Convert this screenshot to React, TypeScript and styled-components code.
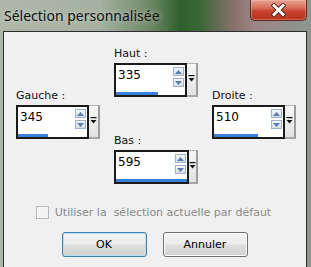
import React from "react"
import styled, { createGlobalStyle } from "styled-components"

const GlobalStyle = createGlobalStyle`
    html, body {
        margin: 0;
        padding: 0;
        background: #f0f0f0;
    }
`

const Window = styled.div`
    width: 311px;
    height: 267px;
    box-sizing: border-box;
    display: flex;
    flex-direction: column;
    padding: 0 4px 0 3px;
    background: linear-gradient(90deg, #aeb8aa 0%, #a4b0a0 32%, #6f8a68 48%, #2f5f2d 58%, #3a6636 64%, #8d7370 76%, #9a8584 82%, #8d9690 100%);
    font-family: "DejaVu Sans", Tahoma, sans-serif;
`

const TitleBar = styled.div`
    height: 31px;
    display: flex;
    justify-content: space-between;
    align-items: flex-start;
`

const Title = styled.span`
    font-family: "Noto Sans", "Open Sans", sans-serif;
    font-size: 14px;
    color: #111;
    padding: 6px 0 0 1px;
    text-shadow: 0 0 6px rgba(255, 255, 255, 0.6);
`

const CloseButton = styled.div`
    width: 57px;
    height: 21px;
    box-sizing: border-box;
    display: flex;
    align-items: center;
    justify-content: center;
    border: 1px solid #5e2820;
    border-top: none;
    border-radius: 0 0 5px 5px;
    background: linear-gradient(180deg, #e6a494 0%, #d96c58 40%, #c8442e 55%, #b6321e 100%);
    box-shadow: inset 0 0 0 1px rgba(255, 200, 180, 0.35);
`

const Body = styled.div`
    flex: 1;
    display: flex;
    flex-direction: column;
    background: #f0f0f0;
    border: 1px solid #2d2d2d;
    border-bottom: none;
`

const Fields = styled.div`
    display: flex;
    gap: 14px;
    padding: 14px 0 0 12px;
`

const Column = styled.div<{ $offset?: number }>`
    width: 84px;
    display: flex;
    flex-direction: column;
    padding-top: ${p => p.$offset ?? 0}px;
`

const Label = styled.div<{ $spaceTop?: number }>`
    font-size: 11px;
    line-height: 15px;
    height: 15px;
    color: #111;
    margin: ${p => p.$spaceTop ?? 0}px 0 2px 0;
`

const SpinField = styled.div`
    display: flex;
    width: 84px;
    height: 34px;
`

const InputPart = styled.div`
    flex: 1;
    display: flex;
    flex-direction: column;
    justify-content: space-between;
    background: #fff;
    border: 2px solid #1b1b1b;
`

const InputTop = styled.div`
    display: flex;
    justify-content: space-between;
    padding: 2px 1px 0 2px;
`

const Value = styled.span`
    font-size: 12px;
    line-height: 14px;
    padding-top: 1px;
    color: #000;
`

const SpinButtons = styled.div`
    display: flex;
    flex-direction: column;
    gap: 2px;
`

const SpinButton = styled.div`
    width: 11px;
    height: 9px;
    box-sizing: border-box;
    display: flex;
    align-items: center;
    justify-content: center;
    border: 1px solid #9fb0c8;
    background: linear-gradient(180deg, #f4f7fb 0%, #d4deea 100%);
`

const Bar = styled.div`
    height: 3px;
    background: transparent;
`

const BarFill = styled.div<{ $fill: number }>`
    height: 100%;
    width: ${p => p.$fill}px;
    background: #3b80d6;
`

const DropStrip = styled.div`
    width: 11px;
    box-sizing: border-box;
    display: flex;
    justify-content: center;
    padding-top: 11px;
    background: linear-gradient(180deg, #f6f6f6 0%, #e2e2e2 100%);
    border-top: 1px solid #b5b5b5;
    border-right: 2px solid #9c9c9c;
    border-bottom: 2px solid #a8a8a8;
`

const CheckRow = styled.label`
    display: flex;
    align-items: center;
    justify-content: center;
    gap: 6px;
    margin-top: 22px;
    margin-right: 3px;
    font-size: 11px;
    color: #8a8a8a;
    white-space: pre;
`

const CheckBox = styled.span`
    width: 13px;
    height: 13px;
    box-sizing: border-box;
    border: 1px solid #b8b8b8;
    background: #f4f4f4;
`

const ButtonRow = styled.div`
    display: flex;
    justify-content: center;
    gap: 16px;
    margin-top: 13px;
    margin-right: 1px;
`

const Button = styled.button<{ $default?: boolean }>`
    width: 85px;
    height: 25px;
    padding: 0;
    font-family: "DejaVu Sans", Tahoma, sans-serif;
    font-size: 11px;
    color: #000;
    border-radius: 3px;
    border: 1px solid ${p => (p.$default ? "#3c7fb1" : "#707070")};
    box-shadow: inset 0 0 0 1px ${p => (p.$default ? "#b4e2f6" : "#fbfbfb")};
    background: linear-gradient(180deg, #f4f4f4 0%, #ececec 48%, #dedede 52%, #d2d2d2 100%);
`

const UpArrow = () => (
    <svg width="7" height="4" viewBox="0 0 7 4">
        <path d="M0 4 L3.5 0 L7 4 Z" fill="#5a7bab" />
    </svg>
)

const DownArrow = () => (
    <svg width="7" height="4" viewBox="0 0 7 4">
        <path d="M0 0 L3.5 4 L7 0 Z" fill="#5a7bab" />
    </svg>
)

const DropGlyph = () => (
    <svg width="7" height="7" viewBox="0 0 7 7">
        <rect x="0.5" y="0" width="6" height="1.2" fill="#111" />
        <path d="M0.5 3 L6.5 3 L3.5 6.5 Z" fill="#111" />
    </svg>
)

const CloseGlyph = () => (
    <svg width="15" height="14" viewBox="0 0 15 14">
        <path d="M3 2.5 L12 11.5 M12 2.5 L3 11.5" stroke="#5a2219" strokeWidth="4.6" strokeLinecap="square" />
        <path d="M3 2.5 L12 11.5 M12 2.5 L3 11.5" stroke="#fff" strokeWidth="2.8" strokeLinecap="square" />
    </svg>
)

interface IFieldProps {
    label: string,
    value: number,
    fill: number,
    spaceTop?: number
}

const Field: React.FC<IFieldProps> = ({ label, value, fill, spaceTop }) => {
    return (
        <>
            <Label $spaceTop={spaceTop}>{label}</Label>
            <SpinField>
                <InputPart>
                    <InputTop>
                        <Value>{value}</Value>
                        <SpinButtons>
                            <SpinButton><UpArrow /></SpinButton>
                            <SpinButton><DownArrow /></SpinButton>
                        </SpinButtons>
                    </InputTop>
                    <Bar><BarFill $fill={fill} /></Bar>
                </InputPart>
                <DropStrip><DropGlyph /></DropStrip>
            </SpinField>
        </>
    )
}

export default function App() {
    return (
        <>
            <GlobalStyle />
            <Window>
                <TitleBar>
                    <Title>Sélection personnalisée</Title>
                    <CloseButton><CloseGlyph /></CloseButton>
                </TitleBar>
                <Body>
                    <Fields>
                        <Column $offset={42}>
                            <Field label="Gauche :" value={345} fill={30} />
                        </Column>
                        <Column>
                            <Field label="Haut :" value={335} fill={42} />
                            <Field label="Bas :" value={595} fill={71} spaceTop={36} />
                        </Column>
                        <Column $offset={42}>
                            <Field label="Droite :" value={510} fill={44} />
                        </Column>
                    </Fields>
                    <CheckRow>
                        <CheckBox />
                        Utiliser la  sélection actuelle par défaut
                    </CheckRow>
                    <ButtonRow>
                        <Button $default>OK</Button>
                        <Button>Annuler</Button>
                    </ButtonRow>
                </Body>
            </Window>
        </>
    )
}
